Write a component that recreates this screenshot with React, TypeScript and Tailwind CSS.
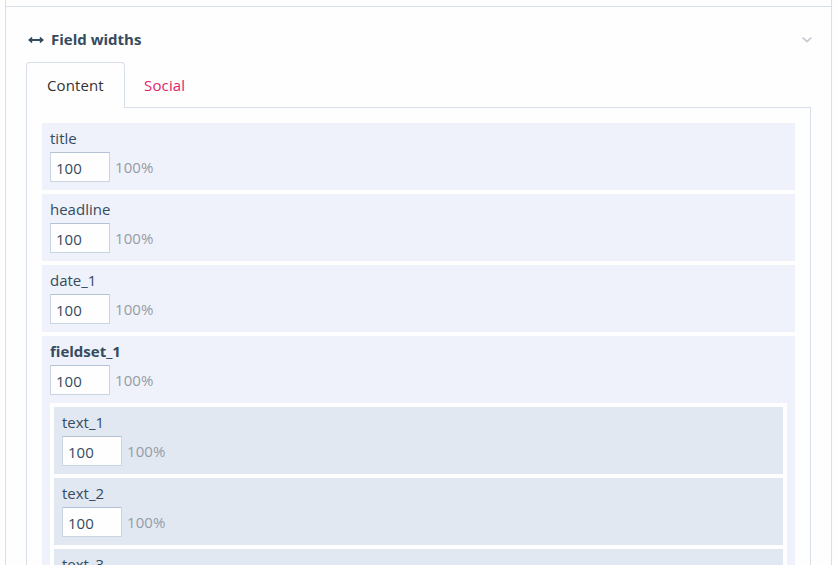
type Field = { name: string; children?: Field[] };

const fields: Field[] = [
  { name: 'title' },
  { name: 'headline' },
  { name: 'date_1' },
  {
    name: 'fieldset_1',
    children: [{ name: 'text_1' }, { name: 'text_2' }, { name: 'text_3' }],
  },
];

function FieldRow({ field, nested = false }: { field: Field; nested?: boolean }) {
  return (
    <li className={`px-2 ${nested ? 'bg-[#e2e8f2]' : 'bg-[#eff2fa]'}`}>
      <div className="h-[67px] pt-[3px]">
        <div className={`h-[26px] leading-6 ${field.children ? 'font-bold' : ''}`}>{field.name}</div>
        <div className="flex h-[30px] items-center gap-[5px]">
          <input
            type="text"
            defaultValue="100"
            className="h-[30px] w-[60px] border border-[#c9d5e2] border-t-[#b3c3d3] bg-[#fefefe] px-[5px] pt-0.5 text-[#354b60] outline-none"
          />
          <span className="leading-[30px] tracking-[0.1px] text-[#949ca6]">100%</span>
        </div>
      </div>
      {field.children && (
        <ul className="flex flex-col gap-1 bg-[#fefefe] p-1">
          {field.children.map((child) => (
            <FieldRow key={child.name} field={child} nested />
          ))}
        </ul>
      )}
    </li>
  );
}

export default function App() {
  return (
    <div className="h-[565px] overflow-hidden bg-[#fefefe] px-[5px] font-['Open_Sans','Noto_Sans',sans-serif] text-[15px] text-[#354b60]">
      <div className="flex h-full flex-col border-x border-[#d9dfe9]">
        <div className="h-[7px] shrink-0 border-b border-[#d9dfe9]" />
        <section className="px-5">
          <header className="flex h-[55px] items-center pt-[10px] pl-0.5">
            <svg width="16" height="8" viewBox="0 0 16 8" fill="#354b60" className="mr-[7px]">
              <path d="M0 4 3.6 1h.6v2h7.6V1h.6L16 4l-3.6 3h-.6V5H4.2v2h-.6z" />
            </svg>
            <h2 className="font-bold">Field widths</h2>
            <svg width="10" height="6" viewBox="0 0 10 6" fill="none" stroke="#c5cad3" strokeWidth="1.7" className="-mr-px ml-auto">
              <path d="M.7.7 5 4.7 9.3.7" />
            </svg>
          </header>
          <nav className="flex">
            <a className="relative z-10 -mb-px flex h-[46px] w-[99px] items-center rounded-t border border-b-0 border-[#d9dfe9] bg-[#fefefe] pl-5 tracking-[0.1px] text-[#333]">
              Content
            </a>
            <a className="flex h-[46px] items-center pl-[19px] tracking-[0.15px] text-[#e0246b]">Social</a>
          </nav>
          <div className="-mt-px border border-[#d9dfe9] p-[15px]">
            <ul className="flex flex-col gap-1">
              {fields.map((field) => (
                <FieldRow key={field.name} field={field} />
              ))}
            </ul>
          </div>
        </section>
      </div>
    </div>
  );
}
